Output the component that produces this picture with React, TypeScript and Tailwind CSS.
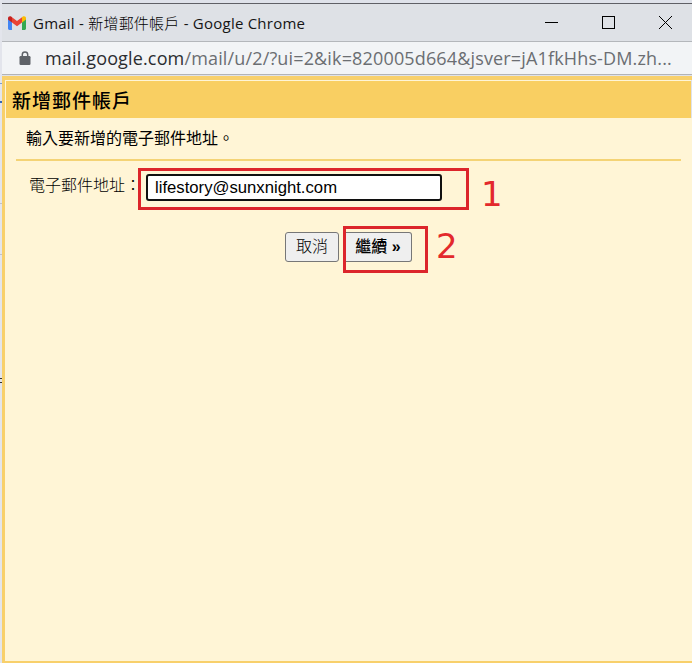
function GmailLogo() {
  return (
    <svg width="18" height="14" viewBox="0 0 18 14" className="block shrink-0">
      <path d="M0 2.2V12.6C0 13.4.6 14 1.3 14H4V6.2L2 1Z" fill="#4285f4" />
      <path d="M18 2.2V12.6C18 13.4 17.4 14 16.7 14H14V6.2L16 1Z" fill="#34a853" />
      <path d="M4 1.3V6.4L9 10.2L14 6.4V1.3L9 5.1Z" fill="#ea4335" />
      <path d="M0 2.1V3.6L4 6.6V1.3L3.2.6C1.8-.4 0 .5 0 2.1Z" fill="#c5221f" />
      <path d="M18 2.1V3.6L14 6.6V1.3L14.8.6C16.2-.4 18 .5 18 2.1Z" fill="#fbbc04" />
    </svg>
  );
}

function LockIcon() {
  return (
    <svg width="12" height="14" viewBox="0 0 12 14" className="block shrink-0">
      <path d="M3.3 6V3.6a2.7 2.7 0 0 1 5.4 0V6" fill="none" stroke="#5f6368" strokeWidth="1.5" />
      <rect x="0.5" y="5" width="11" height="9" rx="1.2" fill="#5f6368" />
    </svg>
  );
}

function TitleBar() {
  return (
    <div className="flex h-[39px] items-center border-y border-t-[#5f6066] border-b-[#b4b7bb] bg-[#dee1e6] pl-[6px]">
      <GmailLogo />
      <span className="ml-[7px] font-['Open_Sans','Noto_Sans_CJK_TC',sans-serif] text-[15px] leading-5 tracking-[0.23px] whitespace-nowrap text-[#151515]">
        Gmail - <span className="font-light text-black">新增郵件帳戶</span> - Google Chrome
      </span>
      <div className="ml-auto flex items-center pr-5 text-black">
        <svg width="13" height="13" viewBox="0 0 13 13" className="mr-[44px]">
          <path d="M0 6.5H13" stroke="currentColor" />
        </svg>
        <svg width="13" height="13" viewBox="0 0 13 13" className="mr-[44px]">
          <rect x="0.5" y="0.5" width="12" height="12" fill="none" stroke="currentColor" />
        </svg>
        <svg width="13" height="13" viewBox="0 0 13 13">
          <path d="M0 0L13 13M13 0L0 13" stroke="currentColor" />
        </svg>
      </div>
    </div>
  );
}

function AddressBar() {
  return (
    <div className="flex h-[33px] items-center border-b border-[#b3b4b6] bg-[#f2f4f6] pl-[17px]">
      <LockIcon />
      <span className="ml-[14px] font-['Open_Sans',sans-serif] text-[18px] leading-6 tracking-[0.15px] whitespace-nowrap text-[#6b6e72]">
        <span className="text-[#2b2d30]">mail.google.com</span>
        /mail/u/2/?ui=2&amp;ik=820005d664&amp;jsver=jA1fkHhs-DM.zh...
      </span>
    </div>
  );
}

function AccountForm() {
  return (
    <main className="flex-1 bg-[#fff5d6] font-['Liberation_Sans','Noto_Sans_CJK_TC',sans-serif] text-[16px] text-black">
      <p className="ml-[11px] mr-[11px] h-[43px] border-b-2 border-[#f4d375] pt-[9px] pl-[10px] leading-6">
        輸入要新增的電子郵件地址。
      </p>
      <div className="mt-[7px] flex items-start pl-[24px]">
        <label htmlFor="email" className="w-[109px] pt-[6px] leading-6 font-light whitespace-nowrap">
          電子郵件地址：
        </label>
        <div className="flex h-[42px] w-[331px] items-start border-3 border-[#dc252b] pt-[3px] pl-[5px]">
          <input
            id="email"
            type="text"
            defaultValue="lifestory@sunxnight.com"
            className="h-[27px] w-[296px] rounded-[3px] border-2 border-[#101010] bg-white pl-[7px] text-[16.7px] outline-none"
          />
        </div>
        <span className="ml-[12px] pt-[6px] font-['DejaVu_Sans',sans-serif] text-[34px] leading-10 text-[#e3292c]">1</span>
      </div>
      <div className="mt-[12px] flex items-start pl-[280px]">
        <button className="mt-[6px] h-[30px] w-[54px] rounded-[3px] border border-[#777] bg-[#efefef] font-light">取消</button>
        <div className="ml-[4px] h-[47px] w-[85px] border-3 border-[#dc252b] pt-[3px]">
          <button className="h-[30px] w-[66px] rounded-r-[3px] border border-l-0 border-[#777] bg-[#efefef] pr-px">
            <span className="font-medium">繼續</span> <span className="font-bold">»</span>
          </button>
        </div>
        <span className="ml-[8px] font-['DejaVu_Sans',sans-serif] text-[34px] leading-10 text-[#e3292c]">2</span>
      </div>
    </main>
  );
}

export default function App() {
  return (
    <div className="flex h-[663px] w-[692px] overflow-hidden bg-[#dfe2ea]">
      {/* Sliver of the window behind */}
      <div className="flex w-[2px] shrink-0 flex-col bg-[#e3e5ec]">
        <div className="mt-[83px] h-px bg-[#7c9bd0]" />
        <div className="mt-[17px] h-[2px] bg-[#3667b5]" />
        <div className="mt-[100px] h-px bg-[#bfc1c8]" />
        <div className="mt-[50px] h-px bg-[#bfc1c8]" />
        <div className="mt-[123px] h-px bg-[#303030]" />
        <div className="mt-[3px] h-px bg-[#303030]" />
      </div>
      <div className="flex min-w-0 flex-1 flex-col pt-[3px]">
        <TitleBar />
        <AddressBar />
        <div className="mt-px flex flex-1 flex-col border-t-4 border-b-2 border-l-3 border-[#f8d06b]">
          <h1 className="mr-px h-[38px] border-t border-l border-[#fff5d6] bg-[#f9cf62] pt-[3px] pl-[6px] font-['Noto_Sans_CJK_TC',sans-serif] text-[19px] leading-8 font-medium tracking-[1px] text-black">
            新增郵件帳戶
          </h1>
          <AccountForm />
        </div>
      </div>
    </div>
  );
}
